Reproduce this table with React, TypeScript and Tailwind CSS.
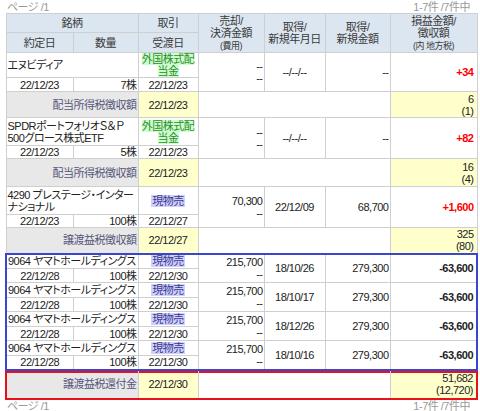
import React from 'react';

type Tax = { label: string; date: string; amt: string; local: string; h: string };

type Entry = {
  name: React.ReactNode;
  kind: 'div' | 'sell';
  sell: [string, string];
  trade: string;
  qty: string;
  settle: string;
  acqDate: string;
  acqAmt: string;
  pl: string;
  nameH: string;
  dateH: string;
  tax?: Tax;
  box?: 'first' | 'mid' | 'last';
};

const entries: Entry[] = [
  {
    name: 'エヌビディア', kind: 'div', sell: ['--', '--'], trade: '22/12/23', qty: '7株', settle: '22/12/23',
    acqDate: '--/--/--', acqAmt: '--', pl: '+34', nameH: 'h-[25px]', dateH: 'h-[14px]',
    tax: { label: '配当所得税徴収額', date: '22/12/23', amt: '6', local: '(1)', h: 'h-[26px]' },
  },
  {
    name: <>SPDRポートフォリオＳ＆Ｐ<br />500グロース株式ETF</>, kind: 'div', sell: ['--', '--'], trade: '22/12/23', qty: '5株', settle: '22/12/23',
    acqDate: '--/--/--', acqAmt: '--', pl: '+82', nameH: 'h-[28px]', dateH: 'h-[13px]',
    tax: { label: '配当所得税徴収額', date: '22/12/23', amt: '16', local: '(4)', h: 'h-[28px]' },
  },
  {
    name: <>4290 プレステージ・インター<br />ナショナル</>, kind: 'sell', sell: ['70,300', '--'], trade: '22/12/23', qty: '100株', settle: '22/12/27',
    acqDate: '22/12/09', acqAmt: '68,700', pl: '+1,600', nameH: 'h-[28px]', dateH: 'h-[13px]',
    tax: { label: '譲渡益税徴収額', date: '22/12/27', amt: '325', local: '(80)', h: 'h-[26px]' },
  },
  ...['18/10/26', '18/10/17', '18/12/26', '18/10/16'].map((d, i): Entry => ({
    name: '9064 ヤマトホールディングス', kind: 'sell', sell: ['215,700', '--'], trade: '22/12/28', qty: '100株', settle: '22/12/30',
    acqDate: d, acqAmt: '279,300', pl: '-63,600', nameH: 'h-[15px]', dateH: 'h-[14px]',
    box: i === 0 ? 'first' : i === 3 ? 'last' : 'mid',
  })),
];

const td = 'border border-[#cfcfcf] px-[1px] py-0 text-[11px] leading-[12px] text-[#222] align-middle';
const th = 'border border-[#cfcfcf] bg-[#dce6f1] px-[2px] py-0 text-[11px] leading-[12px] text-[#3a3a3a] font-normal text-center align-middle';

const BL = 'border-l-2 border-l-[#3a46d0]';
const BR = 'border-r-2 border-r-[#3a46d0]';
const BT = 'border-t-2 border-t-[#3a46d0]';
const BB = 'border-b-2 border-b-[#3a46d0]';

function Kind({ kind }: { kind: 'div' | 'sell' }) {
  if (kind === 'div') {
    return <span className="bg-[#ccffcc] text-[#2e8b2e] [box-decoration-break:clone]">外国株式配当金</span>;
  }
  return <span className="bg-[#d0d0ff] text-[#3a3a8c] px-[1px]">現物売</span>;
}

function EntryRows({ e }: { e: Entry }) {
  const inBox = !!e.box;
  const top = e.box === 'first' ? BT : '';
  const bot = e.box === 'last' ? BB : '';
  const plColor = e.pl.startsWith('-') ? 'text-[#0000ff]' : 'text-[#ff0000]';
  return (
    <>
      <tr className={e.nameH}>
        <td colSpan={2} className={`${td} text-left whitespace-nowrap overflow-hidden ${inBox ? BL : ''} ${top}`}>{e.name}</td>
        <td className={`${td} text-center ${top}`}><Kind kind={e.kind} /></td>
        <td rowSpan={2} className={`${td} text-right ${top} ${bot}`}>
          {e.sell[0]}<br />{e.sell[1]}
        </td>
        <td rowSpan={2} className={`${td} text-center ${top} ${bot}`}>{e.acqDate}</td>
        <td rowSpan={2} className={`${td} text-right ${top} ${bot}`}>{e.acqAmt}</td>
        <td rowSpan={2} className={`${td} pr-[3px] text-right font-bold ${plColor} ${inBox ? BR : ''} ${top} ${bot}`}>{e.pl}</td>
      </tr>
      <tr className={e.dateH}>
        <td className={`${td} text-center ${inBox ? BL : ''} ${bot}`}>{e.trade}</td>
        <td className={`${td} text-right ${bot}`}>{e.qty}</td>
        <td className={`${td} text-center ${bot}`}>{e.settle}</td>
      </tr>
      {e.tax && (
        <tr className={e.tax.h}>
          <td colSpan={2} className={`${td} text-right bg-[#e8e8e8] text-[#55557a]`}>{e.tax.label}</td>
          <td className={`${td} text-center bg-[#ffffcc]`}>{e.tax.date}</td>
          <td colSpan={3} className={td}></td>
          <td className={`${td} pr-[3px] text-right bg-[#ffffcc]`}>{e.tax.amt}<br />{e.tax.local}</td>
        </tr>
      )}
    </>
  );
}

export default function App() {
  const red = 'shadow-[inset_0_2px_0_#e8101a] border-b-2 border-b-[#e8101a]';
  return (
    <div className="w-[480px] h-[411px] overflow-hidden bg-white tracking-[-0.5px] font-['Liberation_Sans','Noto_Sans_CJK_JP',sans-serif] [font-feature-settings:'palt']">
      <div className="h-[13px] flex items-center justify-between pl-[7px] pr-[10px] text-[11px] leading-[12px] text-[#999]">
        <span>ページ /1</span>
        <span>1-7件 /7件中</span>
      </div>
      <table className="ml-[5px] w-[471px] table-fixed border-collapse">
        <colgroup>
          <col className="w-[67px]" />
          <col className="w-[65px]" />
          <col className="w-[60px]" />
          <col className="w-[66px]" />
          <col className="w-[61px]" />
          <col className="w-[65px]" />
          <col className="w-[87px]" />
        </colgroup>
        <thead>
          <tr className="h-[19px]">
            <th colSpan={2} className={th}>銘柄</th>
            <th className={th}>取引</th>
            <th rowSpan={2} className={th}>
              売却/<br />決済金額<br /><span className="text-[9px] leading-[11px]">(費用)</span>
            </th>
            <th rowSpan={2} className={th}>取得/<br />新規年月日</th>
            <th rowSpan={2} className={th}>取得/<br />新規金額</th>
            <th rowSpan={2} className={th}>
              損益金額/<br />徴収額<br /><span className="text-[9px] leading-[11px]">(内 地方税)</span>
            </th>
          </tr>
          <tr className="h-[20px]">
            <th className={th}>約定日</th>
            <th className={th}>数量</th>
            <th className={th}>受渡日</th>
          </tr>
        </thead>
        <tbody>
          {entries.map((e, i) => (
            <EntryRows key={i} e={e} />
          ))}
          <tr className="h-[29px]">
            <td colSpan={2} className={`${td} text-right bg-[#e8e8e8] text-[#55557a] border-l-2 border-l-[#e8101a] ${red}`}>譲渡益税還付金</td>
            <td className={`${td} text-center bg-[#ffffcc] ${red}`}>22/12/30</td>
            <td colSpan={3} className={`${td} ${red}`}></td>
            <td className={`${td} pr-[3px] text-right bg-[#ffffcc] border-r-2 border-r-[#e8101a] ${red}`}>51,682<br />(12,720)</td>
          </tr>
        </tbody>
      </table>
      <div className="h-[13px] flex items-center justify-between pl-[7px] pr-[10px] text-[11px] leading-[12px] text-[#999]">
        <span>ページ /1</span>
        <span>1-7件 /7件中</span>
      </div>
    </div>
  );
}
